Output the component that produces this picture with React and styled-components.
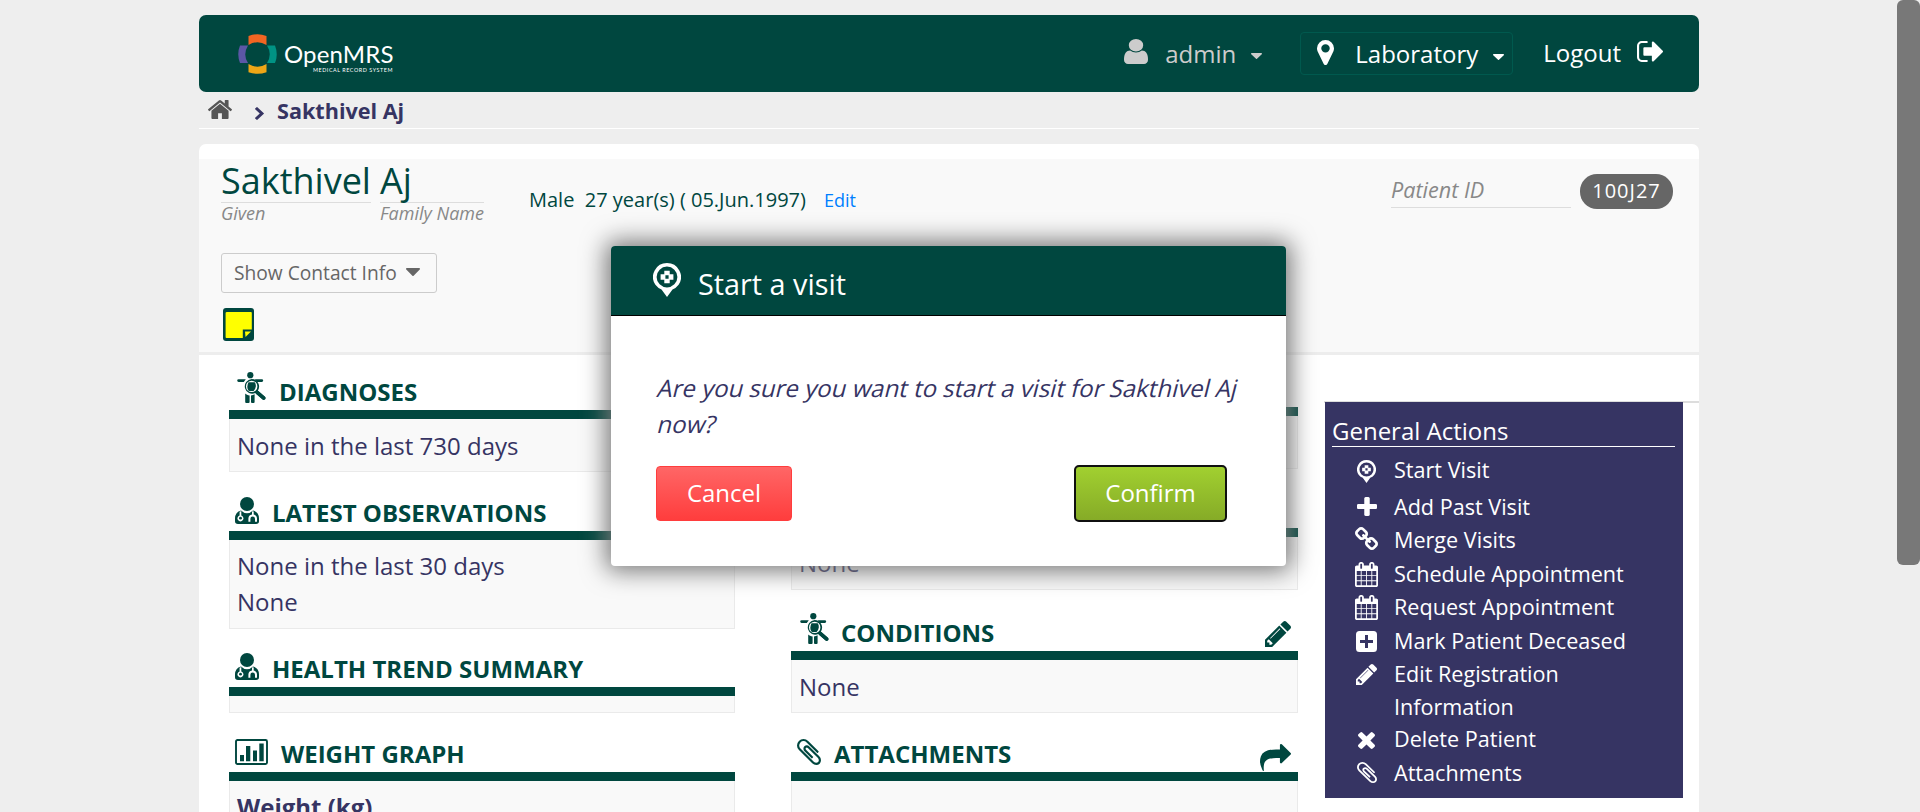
import React from "react";
import styled, { createGlobalStyle } from "styled-components";

const GREEN = "#00473f";
const NAVY = "#363463";

const GlobalStyle = createGlobalStyle`
  * { box-sizing: border-box; }
  html, body { margin: 0; height: 812px; overflow: hidden; }
  body {
    background: #eeeeee;
    font-family: "Open Sans", "Noto Sans", sans-serif;
    color: ${NAVY};
  }
`;

const paths = {
  home: ["89 253 1614 1283", "M1472 992v480q0 26-19 45t-45 19h-384v-384h-256v384h-384q-26 0-45-19t-19-45v-480q0-1 .5-3t.5-3l575-474 575 474q1 2 1 6zm223-69l-62 74q-8 9-21 11h-3q-13 0-21-7l-692-577-692 577q-12 8-24 7-13-2-21-11l-62-74q-8-10-7-23.5t11-21.5l719-599q32-26 76-26t76 26l244 204v-195q0-14 9-23t23-9h192q14 0 23 9t9 23v408l219 182q10 8 11 21.5t-7 23.5z"],
  user: ["256 128 1280 1536", "M1536 1399q0 109-62.5 187t-150.5 78h-854q-88 0-150.5-78t-62.5-187q0-85 8.5-160.5t31.5-152 58.5-131 94-89 134.5-34.5q131 128 313 128t313-128q76 0 134.5 34.5t94 89 58.5 131 31.5 152 8.5 160.5zm-256-887q0 159-112.5 271.5t-271.5 112.5-271.5-112.5-112.5-271.5 112.5-271.5 271.5-112.5 271.5 112.5 112.5 271.5z"],
  pin: ["384 128 1024 1536", "M1152 640q0-106-75-181t-181-75-181 75-75 181 75 181 181 75 181-75 75-181zm256 0q0 109-33 179l-364 774q-16 33-47.5 52t-67.5 19-67.5-19-46.5-52l-365-774q-33-70-33-179 0-212 150-362t362-150 362 150 150 362z"],
  signOut: ["64 256 1568 1280", "M704 1440q0 4 1 20t.5 26.5-3 23.5-10 19.5-20.5 6.5h-320q-119 0-203.5-84.5t-84.5-203.5v-704q0-119 84.5-203.5t203.5-84.5h320q13 0 22.5 9.5t9.5 22.5q0 4 1 20t.5 26.5-3 23.5-10 19.5-20.5 6.5h-320q-66 0-113 47t-47 113v704q0 66 47 113t113 47h312l11.5 1 11.5 3 8 5.5 7 9 2 13.5zm928-544q0 26-19 45l-544 544q-19 19-45 19t-45-19-19-45v-288h-448q-26 0-45-19t-19-45v-384q0-26 19-45t45-19h448v-288q0-26 19-45t45-19 45 19l544 544q19 19 19 45z"],
  plus: ["192 128 1408 1408", "M1600 736v192q0 40-28 68t-68 28h-416v416q0 40-28 68t-68 28h-192q-40 0-68-28t-28-68v-416h-416q-40 0-68-28t-28-68v-192q0-40 28-68t68-28h416v-416q0-40 28-68t68-28h192q40 0 68 28t28 68v416h416q40 0 68 28t28 68z"],
  link: ["80 16 1632 1632", "M1520 1216q0-40-28-68l-208-208q-28-28-68-28-42 0-72 32 3 3 19 18.5t21.5 21.5 15 19 13 25.5 3.5 27.5q0 40-28 68t-68 28q-15 0-27.5-3.5t-25.5-13-19-15-21.5-21.5-18.5-19q-33 31-33 73 0 40 28 68l206 207q27 27 68 27 40 0 68-26l147-146q28-28 28-67zm-703-705q0-40-28-68l-206-207q-28-28-68-28-39 0-68 27l-147 146q-28 28-28 67 0 40 28 68l208 208q27 27 68 27 42 0 72-31-3-3-19-18.5t-21.5-21.5-15-19-13-25.5-3.5-27.5q0-40 28-68t68-28q15 0 27.5 3.5t25.5 13 19 15 21.5 21.5 18.5 19q33-31 33-73zm895 705q0 120-85 203l-147 146q-83 83-203 83-121 0-204-85l-206-207q-83-83-83-203 0-123 88-209l-88-88q-86 88-208 88-120 0-204-84l-208-208q-84-84-84-204t85-203l147-146q83-83 203-83 121 0 204 85l206 207q83 83 83 203 0 123-88 209l88 88q86-88 208-88 120 0 204 84l208 208q84 84 84 204z"],
  calendar: ["64 0 1664 1792", "M192 1664h288v-288h-288v288zm352 0h320v-288h-320v288zm-352-352h288v-320h-288v320zm352 0h320v-320h-320v320zm-352-384h288v-288h-288v288zm736 736h320v-288h-320v288zm-384-736h320v-288h-320v288zm768 736h288v-288h-288v288zm-384-352h320v-320h-320v320zm-352-864v-288q0-13-9.5-22.5t-22.5-9.5h-64q-13 0-22.5 9.5t-9.5 22.5v288q0 13 9.5 22.5t22.5 9.5h64q13 0 22.5-9.5t9.5-22.5zm736 864h288v-320h-288v320zm-384-384h320v-288h-320v288zm384 0h288v-288h-288v288zm32-480v-288q0-13-9.5-22.5t-22.5-9.5h-64q-13 0-22.5 9.5t-9.5 22.5v288q0 13 9.5 22.5t22.5 9.5h64q13 0 22.5-9.5t9.5-22.5zm384-64v1280q0 52-38 90t-90 38h-1408q-52 0-90-38t-38-90v-1280q0-52 38-90t90-38h128v-96q0-66 47-113t113-47h64q66 0 113 47t47 113v96h384v-96q0-66 47-113t113-47h64q66 0 113 47t47 113v96h128q52 0 90 38t38 90z"],
  pencil: ["128 149 1515 1515", "M491 1536l91-91-235-235-91 91v107h128v128h107zm523-928q0-22-22-22-10 0-17 7l-542 542q-7 7-7 17 0 22 22 22 10 0 17-7l542-542q7-7 7-17zm-54-192l416 416-832 832h-416v-416zm683 96q0 53-37 90l-166 166-416-416 166-165q36-38 90-38 53 0 91 38l235 234q37 39 37 91z"],
  times: ["302 366 1188 1188", "M1490 1322q0 40-28 68l-136 136q-28 28-68 28t-68-28l-294-294-294 294q-28 28-68 28t-68-28l-136-136q-28-28-28-68t28-68l294-294-294-294q-28-28-28-68t28-68l136-136q28-28 68-28t68 28l294 294 294-294q28-28 68-28t68 28l136 136q28 28 28 68t-28 68l-294 294 294 294q28 28 28 68z"],
  paperclip: ["196 132 1400 1528", "M1596 1385q0 117-79 196t-196 79q-135 0-235-100l-777-776q-113-115-113-271 0-159 110-270t269-111q158 0 273 113l605 606q10 10 10 22 0 16-30.5 46.5t-46.5 30.5q-13 0-23-10l-606-607q-79-77-181-77-106 0-179 75t-73 181q0 105 76 181l776 777q63 63 145 63 64 0 106-42t42-106q0-82-63-145l-581-581q-26-24-60-24-29 0-48 19t-19 48q0 32 25 59l410 410q10 10 10 22 0 16-31 47t-47 31q-12 0-22-10l-410-410q-63-61-63-149 0-82 57-139t139-57q88 0 149 63l581 581q100 98 100 235z"],
  chevron: ["346 26 1036 1612", "M1363 877l-742 742q-19 19-45 19t-45-19l-166-166q-19-19-19-45t19-45l531-531-531-531q-19-19-19-45t19-45l166-166q19-19 45-19t45 19l742 742q19 19 19 45t-19 45z"],
  caret: ["384 640 1024 576", "M1408 704q0 26-19 45l-448 448q-19 19-45 19t-45-19l-448-448q-19-19-19-45t19-45 45-19h896q26 0 45 19t19 45z"],
  share: ["0 64 1792 1600", "M1792 640q0 26-19 45l-512 512q-19 19-45 19t-45-19-19-45v-256h-224q-98 0-175.5 6t-154 21.5-133 42.5-105.5 69.5-80 101-48.5 138.5-17.5 181q0 55 5 123 0 6 2.5 23.5t2.5 26.5q0 15-8.5 25t-23.5 10q-16 0-28-17-7-9-13-22t-13.5-30-10.5-24q-127-285-127-451 0-199 53-333 162-403 875-403h224v-256q0-26 19-45t45-19 45 19l512 512q19 19 19 45z"],
};

const drawings = {
  visit: {
    box: "0 0 28 34",
    body: (
      <>
        <path fillRule="evenodd" d="M14 0a14 14 0 0 1 11.6 21.8Q23 25.3 19.5 26.400L14 34 8.500 26.400Q5 25.300 2.400 21.800A14 14 0 0 1 14 0zM14 3.600a10.400 10.400 0 1 0 0 20.800a10.400 10.400 0 0 0 0-20.800z" />
        <path fillRule="evenodd" d="M11.300 7.800h5.400v3.500h3.700v5.400h-3.700v3.500h-5.400v-3.500H7.600v-5.400h3.700zM12.400 12.300v3.400h3.200v-3.400z" />
      </>
    ),
  },
  diagnosis: {
    box: "0 0 29 32",
    body: (
      <>
        <circle cx="13.3" cy="3.200" r="3.100" />
        <path d="M1.600 7.200h7.200L6.800 10H1.600a1.400 1.400 0 0 1 0-2.800zM17.800 7.200h7a1.400 1.400 0 0 1 0 2.800H20zM8.200 21.500c1 1 2.600 1.800 4.400 2V30a1 1 0 0 1-1 1H9.200a1 1 0 0 1-1-1zM14 23.500q2-.2 3.600-1.200V30a1 1 0 0 1-1 1H15a1 1 0 0 1-1-1z" />
        <path fillRule="evenodd" d="M14.700 7a7.400 7.400 0 0 1 6.100 11.500l7.200 6.200a1.500 1.500 0 0 1-2.300 2.700l-7.400-6.300A7.400 7.400 0 1 1 14.700 7zm0 1.700a5.700 5.700 0 1 0 0 11.400a5.700 5.700 0 0 0 0-11.400z" />
        <path d="M11.500 10.300h6.200q1.400 1.800 1.100 4.200-.4 2.700-2.200 4.500h-4.800q-1.600-1.700-1.500-4.200t1.200-4.500zM19.400 19.700l1.200-1.200 7.300 6.200q.9 1.200 0 2.400t-2.300.5l-7-6z" />
      </>
    ),
  },
  doctor: {
    box: "0 0 24 27",
    body: (
      <>
        <circle cx="12" cy="7" r="7" />
        <path fillRule="evenodd" d="M6 13.500Q8.600 16.200 12 16.200t6-2.700q5.800 1.700 6 7.800v3Q24 27 21 27H3q-3 0-3-2.700v-3Q.2 15.200 6 13.500zM4.600 14.800v3.700a3 3 0 1 0 1.700 0v-4.500zM17 14v3.600q-3.500.6-3.600 4v3.200h2v-3q0-2.200 2.300-2.300 2.200 0 2.300 2.300v3h2v-3.200q-.1-3.300-3.300-4V14.500z" />
        <circle cx="5.500" cy="21.200" r="1.400" />
      </>
    ),
  },
  chart: {
    box: "0 0 33 26",
    body: (
      <>
        <rect x="1" y="1" width="31" height="24" rx="1.500" fill="none" stroke="currentColor" strokeWidth="1.900" />
        <path d="M5 16h4v6.300H5zM11 7h4.300v15.300H11zM18 11.500h4v10.800h-4zM24.300 4.500h4.400v17.800h-4.400z" />
      </>
    ),
  },
  plusSquare: {
    box: "0 0 21 21",
    body: <path fillRule="evenodd" d="M3.500 0h14Q21 0 21 3.500v14q0 3.500-3.500 3.500h-14Q0 21 0 17.500v-14Q0 0 3.500 0zM9 4v5H4v3h5v5h3v-5h5V9h-5V4z" />,
  },
  note: {
    box: "0 0 31 33",
    body: (
      <>
        <rect width="31" height="33" rx="3" />
        <path d="M4 4h24q.8 0 .8 1v16.500h-9V30H3.400q-.8 0-.8-1V5q0-1 1.400-1z" fill="#ffff00" />
        <path d="M22 23.500h6L22.500 29z" fill="#ffff00" />
      </>
    ),
  },
};

const Svg = styled.svg`
  display: block;
  flex: none;
  fill: currentColor;
  width: ${(p) => p.$w}px;
  height: ${(p) => p.$h}px;
`;

function Icon({ name, w, h, className }) {
  const d = drawings[name];
  return (
    <Svg className={className} $w={w} $h={h} viewBox={d ? d.box : paths[name][0]} preserveAspectRatio="none" aria-hidden="true">
      {d ? d.body : <path d={paths[name][1]} />}
    </Svg>
  );
}

const Page = styled.div`
  width: 1500px;
  height: 812px;
  margin-left: 199px;
  padding-top: 15px;
  overflow: hidden;
`;

const Header = styled.header`
  display: flex;
  height: 77px;
  padding: 17px 0 0 39px;
  border-radius: 7px;
  background: ${GREEN};
  color: #fff;
`;

const Logo = styled.div`
  display: flex;
  width: 180px;
  svg { display: block; }
`;

const LogoName = styled.div`
  margin: 8px 0 0 7px;
  font: 400 24px/28px Lato, sans-serif;
  letter-spacing: 0.15px;
`;

const LogoTag = styled.div`
  margin: -1px 0 0 36px;
  font: 400 5.400px/6px Lato, sans-serif;
  letter-spacing: 0.55px;
  white-space: nowrap;
`;

const HeaderNav = styled.nav`
  display: flex;
  margin-left: auto;
  padding-right: 36px;
  font-size: 24px;
  line-height: 30px;
`;

const UserMenu = styled.div`
  display: flex;
  flex: none;
  width: 176px;
  color: #cccccc;
  padding-top: 7px;
  span { margin-left: 17px; }
  svg:last-child { margin: 14px 0 0 15px; }
`;

const LocationMenu = styled.div`
  display: flex;
  flex: none;
  width: 213px;
  height: 43px;
  padding: 6px 0 0 16px;
  border: 1px solid #00594e;
  border-radius: 4px;
  svg:first-child { margin-top: 1px; }
  span { margin-left: 21px; }
  svg:last-child { margin: 15px 0 0 15px; }
`;

const LogoutLink = styled.div`
  display: flex;
  margin-left: 30px;
  padding-top: 6px;
  svg { margin: 3px 0 0 16px; }
`;

const Breadcrumbs = styled.div`
  display: flex;
  height: 37px;
  padding: 4px 0 0 9px;
  border-bottom: 1px solid #fff;
  font-size: 21.600px;
  font-weight: 700;
  line-height: 30px;
  svg:first-child { margin-top: 4px; color: #555; }
  svg:nth-child(2) { margin: 11px 13px 0 23px; }
`;

const Content = styled.main`
  height: 700px;
  margin-top: 15px;
  padding-top: 15px;
  border-radius: 7px;
  background: #fff;
`;

const PatientHeader = styled.section`
  height: 196px;
  padding: 0 26px 0 22px;
  background: #f9f9f9;
  border-bottom: 3px solid #ededed;
`;

const PatientRow = styled.div`
  display: flex;
  height: 94px;
`;

const NamePart = styled.div`
  width: ${(p) => p.$w}px;
  margin-right: 9px;
  color: ${GREEN};
  font-size: 36px;
  line-height: 43px;
  white-space: nowrap;
  small {
    display: block;
    border-top: 1px solid #ddd;
    color: #888;
    font-size: 18px;
    font-style: italic;
    line-height: 21px;
  }
`;

const Demographics = styled.div`
  margin: 26px 0 0 36px;
  color: ${GREEN};
  font-size: 20px;
  line-height: 30px;
  white-space: pre;
  a { margin-left: 18px; color: #007fff; font-size: 18px; }
`;

const Identifier = styled.div`
  display: flex;
  margin: 15px 0 0 auto;
  em {
    width: 180px;
    height: 34px;
    border-bottom: 1px solid #ddd;
    color: #888;
    font-size: 21.600px;
    line-height: 31px;
  }
  span {
    width: 93px;
    height: 35px;
    margin-left: 9px;
    border-radius: 17px;
    background: #666;
    color: #fff;
    font-size: 20px;
    letter-spacing: 1px;
    line-height: 34px;
    text-align: center;
  }
`;

const ContactButton = styled.button`
  display: flex;
  align-items: center;
  width: 216px;
  height: 40px;
  padding: 0 12px;
  border: 1px solid #ccc;
  border-radius: 3px;
  background: transparent;
  color: #666;
  font: 400 19.200px/28px "Open Sans", sans-serif;
  white-space: nowrap;
  svg { margin: -2px 0 0 9px; }
`;

const StickyNote = styled.div`
  margin: 15px 0 0 2px;
  color: ${GREEN};
`;

const Dashboard = styled.div`
  display: flex;
  padding-left: 30px;
`;

const Column = styled.div`
  flex: none;
  width: ${(p) => p.$w}px;
  margin-right: ${(p) => p.$gap}px;
`;

const Card = styled.section`
  height: ${(p) => p.$h}px;
  padding-top: ${(p) => p.$top || 0}px;
`;

const CardTitle = styled.h3`
  display: flex;
  align-items: flex-end;
  height: ${(p) => p.$h || 60}px;
  margin: 0;
  padding: 0 7px 0 ${(p) => p.$left}px;
  border-bottom: 9px solid ${GREEN};
  color: ${GREEN};
  font-size: 24px;
  font-weight: 700;
  line-height: 34px;
  white-space: nowrap;
`;

const TitleIcon = styled(Icon)`
  margin-bottom: ${(p) => p.mb}px;
`;

const TitleText = styled.span`
  margin: 0 auto 1px ${(p) => p.$gap}px;
`;

const CardBody = styled.div`
  height: ${(p) => p.$h}px;
  padding: ${(p) => p.$pt || 8}px 7px 0;
  border: 1px solid #eaeaea;
  border-top: 0;
  background: #f9f9f9;
  font-size: 24px;
  line-height: 36px;
`;

const Strong = styled.strong`
  font-weight: 700;
`;

const Sidebar = styled.aside`
  flex: 1;
  margin-top: 46px;
  border-top: 2px solid #ddd;
`;

const ActionPanel = styled.div`
  width: 358px;
  height: 396px;
  margin: -1px 0 0 1px;
  padding: 14px 8px 0 7px;
  background: ${NAVY};
  color: #fff;
`;

const ActionHeading = styled.h3`
  height: 31px;
  margin: 0 0 6px;
  border-bottom: 1px solid #fff;
  font-size: 24px;
  font-weight: 400;
  line-height: 30px;
`;

const Action = styled.div`
  display: flex;
  height: ${(p) => p.$h || 33.4}px;
  font-size: 21.600px;
  line-height: 33px;
  span { width: 250px; white-space: pre-line; }
`;

const ActionIcon = styled.div`
  display: flex;
  justify-content: center;
  width: 23px;
  margin: 0 16px 0 23px;
  padding-top: ${(p) => p.$top + 3}px;
`;

const Dialog = styled.div`
  position: absolute;
  left: 611px;
  top: 246px;
  width: 675px;
  height: 320px;
  border-radius: 4px;
  background: #fff;
  box-shadow: 0 0 25px 5px #777;
`;

const DialogHeader = styled.div`
  display: flex;
  height: 70px;
  padding: 17px 0 0 42px;
  border-bottom: 1px solid #000;
  border-radius: 4px 4px 0 0;
  background: ${GREEN};
  color: #fff;
  font-size: 28.800px;
  line-height: 41px;
  span { margin-left: 17px; }
`;

const DialogText = styled.p`
  margin: 54px 0 0;
  padding-left: 45px;
  font-size: 24px;
  line-height: 36px;
`;

/* Upright letter shapes, slanted about the baseline */
const Slanted = styled.span`
  display: block;
  width: max-content;
  transform: skewX(-14deg);
  transform-origin: 0 27px;
  white-space: nowrap;
`;

const DialogButtons = styled.div`
  display: flex;
  justify-content: space-between;
  margin: 24px 60px 0 45px;
`;

const Button = styled.button`
  width: ${(p) => p.$w}px;
  height: 55px;
  padding: 0 0 2px;
  border: 1px solid ${(p) => (p.$confirm ? "#7ba428" : "#ff3d3d")};
  border-radius: 4px;
  outline: ${(p) => (p.$confirm ? "2px solid #101010" : "none")};
  outline-offset: -1px;
  background: ${(p) => (p.$confirm ? "linear-gradient(#a1d030, #86ab27)" : "linear-gradient(#ff6666, #ff3d3d)")};
  color: #fff;
  font: 400 24px/36px "Open Sans", sans-serif;
`;

const Scrollbar = styled.div`
  position: absolute;
  right: 0;
  top: 0;
  width: 23px;
  height: 565px;
  border-radius: 6px;
  background: #787878;
`;

function DashboardCard({ h, top, titleH, left, icon, iw, ih, mb, gap, title, tool, bodyH, pt, children }) {
  return (
    <Card $h={h} $top={top}>
      <CardTitle $h={titleH} $left={left}>
        <TitleIcon name={icon} w={iw} h={ih} mb={mb} />
        <TitleText $gap={gap}>{title}</TitleText>
        {tool}
      </CardTitle>
      <CardBody $h={bodyH} $pt={pt}>{children}</CardBody>
    </Card>
  );
}

const actions = [
  { icon: "visit", w: 19, h: 23, top: 4, label: "Start Visit", row: 37 },
  { icon: "plus", w: 20, h: 19, top: 4, label: "Add Past Visit" },
  { icon: "link", w: 23, h: 23, top: 1, label: "Merge Visits" },
  { icon: "calendar", w: 23, h: 25, top: 2, label: "Schedule Appointment" },
  { icon: "calendar", w: 23, h: 25, top: 2, label: "Request Appointment" },
  { icon: "plusSquare", w: 21, h: 21, top: 4, label: "Mark Patient Deceased" },
  { icon: "pencil", w: 21, h: 21, top: 4, label: "Edit Registration\nInformation", row: 65 },
  { icon: "times", w: 17, h: 17, top: 7, label: "Delete Patient", row: 34 },
  { icon: "paperclip", w: 20, h: 21, top: 3, label: "Attachments" },
];

export default function App() {
  return (
    <>
      <GlobalStyle />
      <Page>
        <Header>
          <Logo>
            <svg width="39" height="44" viewBox="0 0 39 44">
              <path d="M10.500 4q9-3.500 18 0v9q-9-5.500-18 0z" fill="#f26522" />
              <path d="M10.500 32q9 5.500 18 0v8.300q-9 3-18 0z" fill="#eea616" />
              <path d="M2 13.500h8q-5.500 9 0 17.500H2q-3.500-9 0-17.500z" fill="#5b57a6" />
              <path d="M29 13.500h8q3.500 9 0 17.500h-8q5.500-9 0-17.500z" fill="#009384" />
            </svg>
            <div>
              <LogoName>OpenMRS</LogoName>
              <LogoTag>MEDICAL RECORD SYSTEM</LogoTag>
            </div>
          </Logo>
          <HeaderNav>
            <UserMenu>
              <Icon name="user" w={24} h={25} />
              <span>admin</span>
              <Icon name="caret" w={11} h={6} />
            </UserMenu>
            <LocationMenu>
              <Icon name="pin" w={17} h={25} />
              <span>Laboratory</span>
              <Icon name="caret" w={11} h={6} />
            </LocationMenu>
            <LogoutLink>
              Logout
              <Icon name="signOut" w={26} h={21} />
            </LogoutLink>
          </HeaderNav>
        </Header>
        <Breadcrumbs>
          <Icon name="home" w={24} h={19} />
          <Icon name="chevron" w={9} h={13} />
          Sakthivel Aj
        </Breadcrumbs>
        <Content>
          <PatientHeader>
            <PatientRow>
              <NamePart $w={150}>Sakthivel<small>Given</small></NamePart>
              <NamePart $w={104}>Aj<small>Family Name</small></NamePart>
              <Demographics>Male  27 year(s) ( 05.Jun.1997)<a>Edit</a></Demographics>
              <Identifier><em>Patient ID</em><span>100J27</span></Identifier>
            </PatientRow>
            <ContactButton>Show Contact Info<Icon name="caret" w={14} h={8} /></ContactButton>
            <StickyNote><Icon name="note" w={31} h={33} /></StickyNote>
          </PatientHeader>
          <Dashboard>
            <Column $w={506} $gap={56}>
              <DashboardCard h={117} titleH={64} left={8} icon="diagnosis" iw={29} ih={32} mb={6} gap={13} title="DIAGNOSES" bodyH={53} pt={9}>
                None in the last 730 days
              </DashboardCard>
              <DashboardCard h={157} top={8} left={6} icon="doctor" iw={24} ih={27} mb={7} gap={13} title="LATEST OBSERVATIONS" bodyH={89}>
                None in the last 30 days<br />None
              </DashboardCard>
              <DashboardCard h={84} top={7} left={6} icon="doctor" iw={24} ih={27} mb={7} gap={13} title="HEALTH TREND SUMMARY" bodyH={17} />
              <DashboardCard h={150} top={8} left={6} icon="chart" iw={33} ih={26} mb={7} gap={13} title="WEIGHT GRAPH" bodyH={80}>
                <Strong>Weight (kg)</Strong>
              </DashboardCard>
            </Column>
            <Column $w={507} $gap={26}>
              <DashboardCard h={114} titleH={61} left={6} icon="doctor" iw={24} ih={27} mb={7} gap={13} title="VITALS" bodyH={53} />
              <DashboardCard h={121} top={8} left={6} icon="doctor" iw={24} ih={27} mb={7} gap={13} title="ALLERGIES" bodyH={53}>
                None
              </DashboardCard>
              <DashboardCard h={123} top={10} left={9} icon="diagnosis" iw={29} ih={32} mb={6} gap={12} title="CONDITIONS" bodyH={53} pt={9} tool={<TitleIcon name="pencil" w={26} h={26} mb={4} />}>
                None
              </DashboardCard>
              <DashboardCard h={150} top={8} left={6} icon="paperclip" iw={24} ih={26} mb={7} gap={13} title="ATTACHMENTS" bodyH={80} tool={<TitleIcon name="share" w={31} h={27} mb={1} />} />
            </Column>
            <Sidebar>
              <ActionPanel>
                <ActionHeading>General Actions</ActionHeading>
                {actions.map((a) => (
                  <Action key={a.label} $h={a.row}>
                    <ActionIcon $top={a.top}><Icon name={a.icon} w={a.w} h={a.h} /></ActionIcon>
                    <span>{a.label}</span>
                  </Action>
                ))}
              </ActionPanel>
            </Sidebar>
          </Dashboard>
        </Content>
      </Page>
      <Dialog role="dialog">
        <DialogHeader>
          <Icon name="visit" w={28} h={34} />
          <span>Start a visit</span>
        </DialogHeader>
        <DialogText>
          <Slanted>Are you sure you want to start a visit for Sakthivel Aj</Slanted>
          <Slanted>now?</Slanted>
        </DialogText>
        <DialogButtons>
          <Button $w={136}>Cancel</Button>
          <Button $w={151} $confirm>Confirm</Button>
        </DialogButtons>
      </Dialog>
      <Scrollbar />
    </>
  );
}
